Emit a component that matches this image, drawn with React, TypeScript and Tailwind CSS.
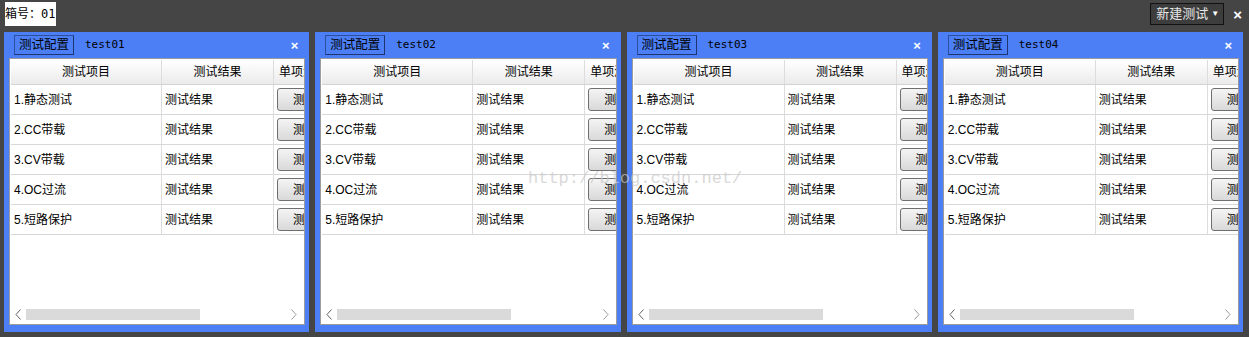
import React from 'react';

const rows = ['1.静态测试', '2.CC带载', '3.CV带载', '4.OC过流', '5.短路保护'];
const names = ['test01', 'test02', 'test03', 'test04'];

const cn = { fontFamily: '"Liberation Sans", "Noto Sans CJK SC", sans-serif' };

const Panel = ({ name }: { name: string }) => {
  return (
    <div className="flex-1 min-w-0 h-[300px] bg-[#4c7ff6] flex flex-col">
      {/* panel header */}
      <div className="h-[26px] flex items-center pl-[10px] pr-[11px]">
        <button
          className="h-[20px] w-[60px] whitespace-nowrap bg-[#4c7ff6] border border-[#2c4f9e] border-b-[#1d3570] border-r-[#1d3570] text-[12.5px] text-black leading-none flex items-center justify-center"
          style={cn}
        >
          测试配置
        </button>
        <span className="ml-[11px] text-[11px] text-black" style={{ fontFamily: '"DejaVu Sans Mono", monospace' }}>
          {name}
        </span>
        <span className="ml-auto text-white text-[13px] font-bold leading-none" style={cn}>
          ×
        </span>
      </div>

      {/* body */}
      <div className="ml-[5px] mr-[4px] h-[267px] bg-white border border-[#9c9c9c] flex flex-col">
        <div className="mt-px ml-px overflow-hidden flex-1">
          <div className="w-[330px] whitespace-nowrap" style={cn}>
            {/* header row */}
            <div className="flex h-[25px] bg-gradient-to-b from-white to-[#ebebeb] border-b border-[#d4d4d4] text-[12px] text-black">
              <div className="w-[151px] flex items-center justify-center border-r border-[#dcdcdc]">测试项目</div>
              <div className="w-[112px] flex items-center justify-center border-r border-[#dcdcdc]">测试结果</div>
              <div className="flex-1 flex items-center pl-[5px]">单项测试</div>
            </div>
            {rows.map((r) => (
              <div key={r} className="flex h-[30px] border-b border-[#d8d8d8] text-[12px] text-black">
                <div className="w-[151px] flex items-center pl-[3px] border-r border-[#dcdcdc]">{r}</div>
                <div className="w-[112px] flex items-center pl-[3px] border-r border-[#dcdcdc]">测试结果</div>
                <div className="flex-1 flex items-center pl-[3px]">
                  <button className="h-[23px] w-[56px] rounded-[3px] border border-[#6f6f6f] bg-gradient-to-b from-[#f4f4f4] to-[#d9d9d9] text-[12px] text-black">
                    测试
                  </button>
                </div>
              </div>
            ))}
          </div>
        </div>
        {/* horizontal scrollbar */}
        <div className="h-[13px] mb-[3px] flex items-center px-[5px]">
          <svg width="7" height="11" viewBox="0 0 7 11" className="shrink-0">
            <path d="M5.5 0.5 L1 5.5 L5.5 10.5" fill="none" stroke="#606060" strokeWidth="1" />
          </svg>
          <div className="ml-[4px] w-[174px] h-[11px] bg-[#dadada]" />
          <svg width="7" height="11" viewBox="0 0 7 11" className="shrink-0 ml-auto mr-[2px]">
            <path d="M1.5 0.5 L6 5.5 L1.5 10.5" fill="none" stroke="#9a9a9a" strokeWidth="1" />
          </svg>
        </div>
      </div>
    </div>
  );
};

export default function App() {
  return (
    <div className="relative w-[1249px] h-[337px] bg-[#454545] overflow-hidden">
      {/* top bar */}
      <div className="h-[32px] flex items-start">
        <div
          className="mt-[2px] ml-[5px] h-[24px] pr-px bg-white flex items-center whitespace-nowrap text-[12px] text-black"
          style={cn}
        >
          箱号：<span style={{ fontFamily: '"DejaVu Sans Mono", monospace' }}>01</span>
        </div>
        <div className="ml-auto mt-[3px] flex items-center">
          <button
            className="h-[22px] w-[74px] whitespace-nowrap bg-[#3d3d3d] border border-[#111111] flex items-center pl-[5px] text-[13px] text-[#e6e6e6]"
            style={cn}
          >
            新建测试
            <span className="ml-auto mr-[4px] text-[8px] text-white">▼</span>
          </button>
          <span className="ml-[9px] mr-[7px] text-white text-[15px] font-bold leading-none" style={cn}>
            ×
          </span>
        </div>
      </div>

      {/* panels */}
      <div className="flex gap-[6px] pl-[4px] pr-[6px]">
        {names.map((n) => (
          <Panel key={n} name={n} />
        ))}
      </div>

      {/* watermark */}
      <div
        className="absolute left-[528px] top-[166px] text-[17px] text-[#c8c8c8]/70 pointer-events-none whitespace-nowrap"
        style={{ fontFamily: '"Liberation Mono", monospace' }}
      >
        http://blog.csdn.net/
      </div>
    </div>
  );
}
